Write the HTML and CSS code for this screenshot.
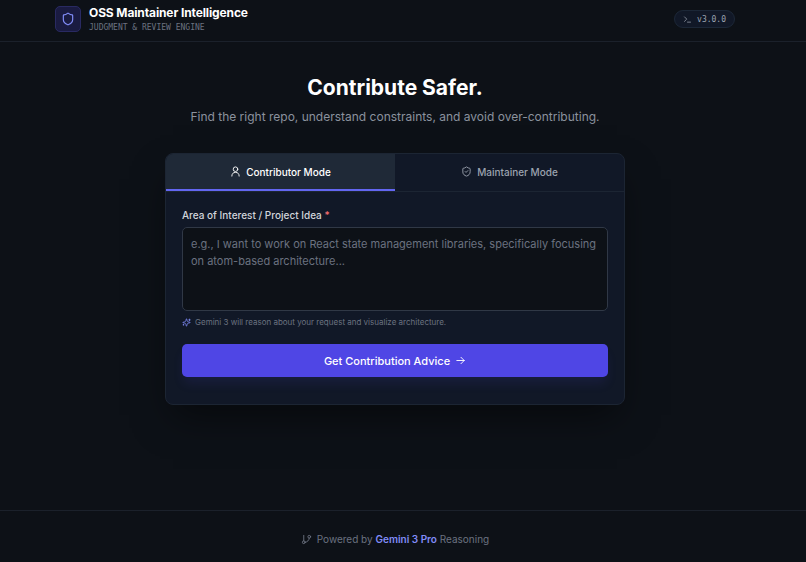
FILE: index.html
```html
<!DOCTYPE html>
<html lang="en">
<head>
  <meta charset="UTF-8" />
  <meta name="viewport" content="width=device-width, initial-scale=1.0" />
  <title>OSS Maintainer Intelligence</title>
  <link rel="stylesheet" href="styles.css">
</head>
<body>
  <header class="header">
    <div class="header-inner">
      <div class="brand">
        <div class="logo">
          <svg class="icon" width="14" height="14" viewBox="0 0 24 24"><path d="M20 13c0 5-3.500 7.500-7.660 8.950a1 1 0 0 1-.67-.01C7.500 20.500 4 18 4 13V6a1 1 0 0 1 1-1c2 0 4.500-1.200 6.240-2.720a1.170 1.170 0 0 1 1.520 0C14.510 3.810 17 5 19 5a1 1 0 0 1 1 1z"/></svg>
        </div>
        <div>
          <h1>OSS Maintainer Intelligence</h1>
          <p class="tagline">JUDGMENT &amp; REVIEW ENGINE</p>
        </div>
      </div>
      <div class="version">
        <svg class="icon" width="9" height="9" viewBox="0 0 24 24"><path d="m4 17 6-6-6-6M12 19h8"/></svg>
        <span>v3.0.0</span>
      </div>
    </div>
  </header>

  <main class="main">
    <h2>Contribute Safer.</h2>
    <p class="lead">Find the right repo, understand constraints, and avoid over-contributing.</p>

    <div class="card">
      <div class="tabs">
        <button type="button" class="tab active">
          <svg class="icon" width="11" height="11" viewBox="0 0 24 24"><circle cx="12" cy="7" r="5"/><path d="M20 22a8 8 0 0 0-16 0"/></svg>
          Contributor Mode
        </button>
        <button type="button" class="tab">
          <svg class="icon" width="11" height="11" viewBox="0 0 24 24"><path d="M20 13c0 5-3.500 7.500-7.660 8.950a1 1 0 0 1-.67-.01C7.500 20.500 4 18 4 13V6a1 1 0 0 1 1-1c2 0 4.500-1.200 6.240-2.720a1.170 1.170 0 0 1 1.520 0C14.510 3.810 17 5 19 5a1 1 0 0 1 1 1z"/><path d="m9 12 2 2 4-4"/></svg>
          Maintainer Mode
        </button>
      </div>

      <form class="form">
        <label for="interest">Area of Interest / Project Idea <span class="required">*</span></label>
        <textarea id="interest" placeholder="e.g., I want to work on React state management libraries, specifically focusing on atom-based architecture..."></textarea>
        <p class="hint">
          <svg class="icon" width="9" height="9" viewBox="0 0 24 24"><path d="M9.940 15.500A2 2 0 0 0 8.500 14.060l-6.140-1.580a.5.5 0 0 1 0-.96L8.500 9.940A2 2 0 0 0 9.940 8.500l1.580-6.140a.5.5 0 0 1 .96 0l1.580 6.140a2 2 0 0 0 1.440 1.440l6.140 1.580a.5.5 0 0 1 0 .96l-6.140 1.580a2 2 0 0 0-1.440 1.440l-1.580 6.140a.5.5 0 0 1-.96 0z"/><path d="M20 3v4M22 5h-4M4 17v2M5 18H3"/></svg>
          Gemini 3 will reason about your request and visualize architecture.
        </p>
        <button type="button" class="submit">
          Get Contribution Advice
          <svg class="icon" width="11" height="11" viewBox="0 0 24 24"><path d="M4 12h16M13 5l7 7-7 7"/></svg>
        </button>
      </form>
    </div>
  </main>

  <footer class="footer">
    <svg class="icon" width="11" height="11" viewBox="0 0 24 24"><path d="M6 3v12"/><circle cx="18" cy="6" r="3"/><circle cx="6" cy="18" r="3"/><path d="M18 9a9 9 0 0 1-9 9"/></svg>
    <p>Powered by <strong>Gemini 3 Pro</strong> Reasoning</p>
  </footer>
</body>
</html>
```
FILE: styles.css
```css
* { box-sizing: border-box; }

body {
  margin: 0;
  min-height: 100vh;
  display: flex;
  flex-direction: column;
  background: #0d1117;
  color: #e5e7eb;
  font-family: Inter, sans-serif;
}

h1, h2, p { margin: 0; }

button, textarea { font-family: inherit; }

.icon {
  flex: none;
  fill: none;
  stroke: currentColor;
  stroke-width: 2;
  stroke-linecap: round;
  stroke-linejoin: round;
}

/* Header */
.header {
  padding: 4px 16px 7px 0;
  border-bottom: 1px solid #1b212b;
}

.header-inner {
  max-width: 680px;
  margin: 0 auto;
  display: flex;
  align-items: center;
  justify-content: space-between;
}

.brand {
  display: flex;
  align-items: center;
  gap: 8px;
}

.logo {
  width: 26px;
  height: 26px;
  display: flex;
  align-items: center;
  justify-content: center;
  background: #1a1b41;
  border: 1px solid #292a62;
  border-radius: 5px;
  color: #818cf8;
}

h1 {
  font-size: 12px;
  line-height: 18px;
  font-weight: 700;
  letter-spacing: -0.01em;
  color: #fff;
}

.tagline {
  font-family: "DejaVu Sans Mono", monospace;
  font-size: 8px;
  line-height: 12px;
  color: #6b7280;
}

.version {
  display: flex;
  align-items: center;
  gap: 5px;
  height: 18px;
  padding: 0 8px;
  background: #111827;
  border: 1px solid #1c2737;
  border-radius: 9px;
  font-family: "DejaVu Sans Mono", monospace;
  font-size: 8px;
  color: #9ca3af;
}

/* Main */
.main {
  flex: 1;
  padding: 33px 16px 32px 0;
  text-align: center;
}

h2 {
  font-size: 21px;
  line-height: 26px;
  font-weight: 700;
  color: #fff;
}

.lead {
  margin-top: 6px;
  font-size: 12px;
  line-height: 20px;
  color: #8b929e;
}

.card {
  max-width: 460px;
  margin: 26px auto 0;
  overflow: hidden;
  text-align: left;
  background: #111827;
  border: 1px solid #1c2533;
  border-radius: 8px;
  box-shadow: 0 18px 36px -8px rgba(0, 0, 0, 0.5);
}

.tabs {
  display: flex;
  border-bottom: 1px solid #1c2533;
}

.tab {
  flex: 1;
  display: flex;
  align-items: center;
  justify-content: center;
  gap: 5px;
  height: 37px;
  padding: 0;
  background: none;
  border: none;
  border-bottom: 2px solid transparent;
  font-size: 10px;
  font-weight: 500;
  color: #9ca3af;
  cursor: pointer;
}

.tab.active {
  background: #1f2937;
  border-bottom-color: #6366f1;
  color: #fff;
}

.form {
  padding: 15px 16px 27px;
}

.form label {
  display: block;
  margin-bottom: 4px;
  font-size: 10px;
  line-height: 16px;
  font-weight: 500;
  color: #d1d5db;
}

.required { color: #f87171; }

.form textarea {
  display: block;
  width: 100%;
  height: 84px;
  padding: 8px;
  resize: none;
  outline: none;
  background: #0d1117;
  border: 1px solid #303846;
  border-radius: 5px;
  font-size: 11px;
  line-height: 17px;
  color: #fff;
}

.form textarea::placeholder { color: #6b7280; }

.hint {
  display: flex;
  align-items: center;
  gap: 4px;
  margin-top: 5px;
  font-size: 8px;
  line-height: 12px;
  color: #6b7280;
}

.hint .icon { color: #818cf8; }

.submit {
  display: flex;
  align-items: center;
  justify-content: center;
  gap: 5px;
  width: 100%;
  height: 33px;
  margin-top: 16px;
  background: #4f46e5;
  border: none;
  border-radius: 5px;
  box-shadow: 0 8px 12px -2px rgba(79, 70, 229, 0.12);
  font-size: 11px;
  font-weight: 500;
  color: #fff;
  cursor: pointer;
}

/* Footer */
.footer {
  display: flex;
  align-items: center;
  justify-content: center;
  gap: 5px;
  padding: 20px 16px 15px 0;
  border-top: 1px solid #1b212b;
  font-size: 10px;
  line-height: 16px;
  color: #6b7280;
}

.footer strong {
  font-weight: 600;
  color: #818cf8;
}
```
